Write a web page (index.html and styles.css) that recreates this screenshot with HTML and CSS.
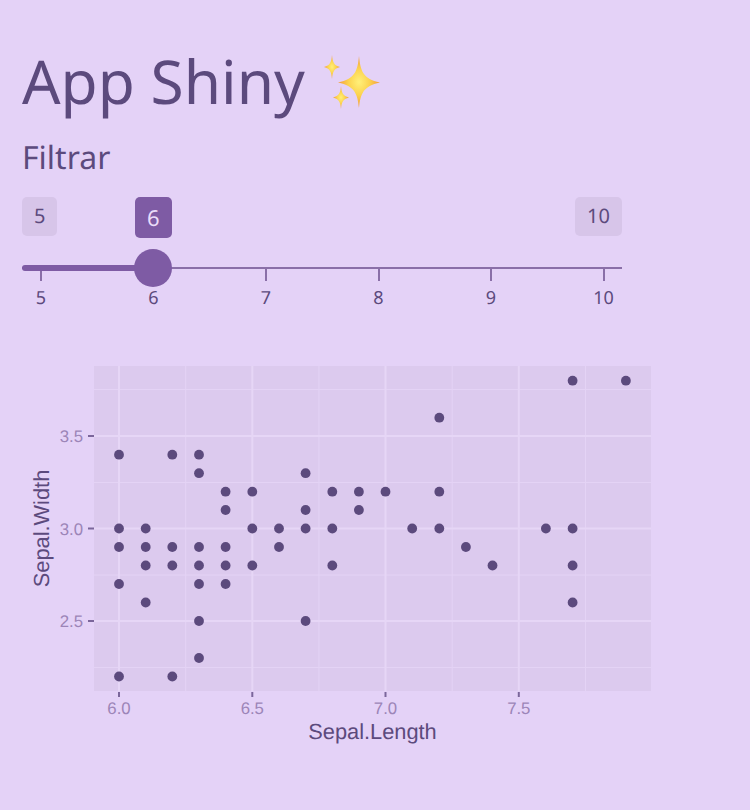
FILE: index.html
```html
<!DOCTYPE html>
<html lang="pt">
<head>
<meta charset="utf-8">
<title>App Shiny</title>
<link rel="stylesheet" href="styles.css">
</head>
<body>
<main class="page">
  <h1 class="title">App Shiny
    <svg class="sparkles" viewBox="0 0 60 60" aria-hidden="true">
      <defs>
        <radialGradient id="spark" cx="50%" cy="50%" r="50%">
          <stop offset="0" stop-color="#fff07a"/>
          <stop offset="0.5" stop-color="#fcd34f"/>
          <stop offset="1" stop-color="#f29a3c"/>
        </radialGradient>
      </defs>
      <path fill="url(#spark)" d="M37 2 C38.500 17 41 25 58 28.500 C41 32 38.500 40 37 54 C35.500 40 33 32 16 28.500 C33 25 35.500 17 37 2Z"/>
      <path fill="url(#spark)" d="M10 1 C10.600 8 12 11.500 18 13 C12 14.500 10.600 18 10 25 C9.400 18 8 14.500 2 13 C8 11.500 9.400 8 10 1Z"/>
      <path fill="url(#spark)" d="M19 32 C19.600 39 21 42 27 43.500 C21 45 19.600 48 19 55 C18.400 48 17 45 11 43.500 C17 42 18.400 39 19 32Z"/>
    </svg>
  </h1>
  <h2 class="subtitle">Filtrar</h2>

  <section class="slider">
    <div class="badges">
      <span class="badge">5</span>
      <span class="badge">10</span>
    </div>
    <span class="badge badge-value">6</span>
    <div class="track"><div class="track-fill"></div><div class="thumb"></div></div>
    <div class="ticks">
      <div class="tick">5</div>
      <div class="tick">6</div>
      <div class="tick">7</div>
      <div class="tick">8</div>
      <div class="tick">9</div>
      <div class="tick">10</div>
    </div>
  </section>

  <svg class="plot" viewBox="22 350 640 400" role="img" aria-label="Sepal.Width por Sepal.Length">
    <rect class="panel" x="94" y="366" width="557" height="325"/>
    <g class="grid-minor">
      <line x1="94" x2="651" y1="389.500" y2="389.500"/>
      <line x1="94" x2="651" y1="482.500" y2="482.500"/>
      <line x1="94" x2="651" y1="575" y2="575"/>
      <line x1="94" x2="651" y1="667.500" y2="667.500"/>
      <line y1="366" y2="691" x1="185.700" x2="185.700"/>
      <line y1="366" y2="691" x1="318.900" x2="318.900"/>
      <line y1="366" y2="691" x1="452.200" x2="452.200"/>
      <line y1="366" y2="691" x1="585.500" x2="585.500"/>
    </g>
    <g class="grid-major">
      <line x1="94" x2="651" y1="436" y2="436"/>
      <line x1="94" x2="651" y1="528.500" y2="528.500"/>
      <line x1="94" x2="651" y1="621" y2="621"/>
      <line y1="366" y2="691" x1="119" x2="119"/>
      <line y1="366" y2="691" x1="252.300" x2="252.300"/>
      <line y1="366" y2="691" x1="385.500" x2="385.500"/>
      <line y1="366" y2="691" x1="518.800" x2="518.800"/>
    </g>
    <g class="axis-ticks">
      <line x1="88" x2="94" y1="436" y2="436"/>
      <line x1="88" x2="94" y1="528.500" y2="528.500"/>
      <line x1="88" x2="94" y1="621" y2="621"/>
      <line y1="692" y2="697" x1="119" x2="119"/>
      <line y1="692" y2="697" x1="252.300" x2="252.300"/>
      <line y1="692" y2="697" x1="385.500" x2="385.500"/>
      <line y1="692" y2="697" x1="518.800" x2="518.800"/>
    </g>
    <g class="tick-labels-y">
      <text x="83" y="442">3.5</text>
      <text x="83" y="534.500">3.0</text>
      <text x="83" y="627">2.5</text>
    </g>
    <g class="tick-labels-x">
      <text x="119" y="714">6.0</text>
      <text x="252.300" y="714">6.5</text>
      <text x="385.500" y="714">7.0</text>
      <text x="518.800" y="714">7.5</text>
    </g>
    <text class="axis-title" x="372.500" y="739">Sepal.Length</text>
    <text class="axis-title" transform="translate(49 528.500) rotate(-90)">Sepal.Width</text>
    <g class="points">
      <circle cx="572.600" cy="380.700"/><circle cx="625.900" cy="380.700"/>
      <circle cx="439.300" cy="417.700"/>
      <circle cx="119" cy="454.700"/><circle cx="172.300" cy="454.700"/><circle cx="199" cy="454.700"/>
      <circle cx="199" cy="473.200"/><circle cx="305.600" cy="473.200"/>
      <circle cx="225.600" cy="491.700"/><circle cx="252.300" cy="491.700"/><circle cx="332.300" cy="491.700"/><circle cx="358.900" cy="491.700"/><circle cx="385.500" cy="491.700"/><circle cx="439.300" cy="491.700"/>
      <circle cx="225.600" cy="510"/><circle cx="305.600" cy="510"/><circle cx="358.900" cy="510"/>
      <circle cx="119" cy="528.500"/><circle cx="145.700" cy="528.500"/><circle cx="252.300" cy="528.500"/><circle cx="279" cy="528.500"/><circle cx="305.600" cy="528.500"/><circle cx="332.300" cy="528.500"/><circle cx="412.200" cy="528.500"/><circle cx="439.300" cy="528.500"/><circle cx="545.900" cy="528.500"/><circle cx="572.600" cy="528.500"/>
      <circle cx="119" cy="547"/><circle cx="145.700" cy="547"/><circle cx="172.300" cy="547"/><circle cx="199" cy="547"/><circle cx="225.600" cy="547"/><circle cx="279" cy="547"/><circle cx="465.900" cy="547"/>
      <circle cx="145.700" cy="565.500"/><circle cx="172.300" cy="565.500"/><circle cx="199" cy="565.500"/><circle cx="225.600" cy="565.500"/><circle cx="252.300" cy="565.500"/><circle cx="332.300" cy="565.500"/><circle cx="492.500" cy="565.500"/><circle cx="572.600" cy="565.500"/>
      <circle cx="119" cy="584"/><circle cx="199" cy="584"/><circle cx="225.600" cy="584"/>
      <circle cx="145.700" cy="602.500"/><circle cx="572.600" cy="602.500"/>
      <circle cx="199" cy="621"/><circle cx="305.600" cy="621"/>
      <circle cx="199" cy="658"/>
      <circle cx="119" cy="676.500"/><circle cx="172.300" cy="676.500"/>
    </g>
  </svg>
</main>
</body>
</html>
```
FILE: styles.css
```css
html, body {
  margin: 0;
  padding: 0;
  background: #e4d2f7;
}

body {
  font-family: "Noto Sans", "Open Sans", sans-serif;
  color: #5c4a7d;
  text-rendering: geometricPrecision;
}

.page {
  padding: 0 22px;
  height: 810px;
  box-sizing: border-box;
  overflow: hidden;
}

.title {
  display: flex;
  align-items: center;
  gap: 17px;
  margin: 0;
  padding-top: 39px;
  font-size: 60.400px;
  font-weight: 400;
  line-height: 84px;
}

.sparkles {
  width: 60px;
  height: 60px;
  margin-top: 5px;
}

.subtitle {
  margin: 0;
  padding-top: 13px;
  font-size: 32px;
  font-weight: 400;
  line-height: 44px;
}

.slider {
  position: relative;
  width: 600px;
  margin-top: 17px;
}

.badges {
  display: flex;
  justify-content: space-between;
}

.badge {
  padding: 0 12px;
  height: 39px;
  border-radius: 5px;
  background: #d7c5e9;
  font-size: 20px;
  line-height: 37px;
  color: #5c4a7d;
}

.badge-value {
  position: absolute;
  left: 113px;
  top: 0;
  height: 41px;
  padding: 0 12px;
  line-height: 43px;
  font-size: 22px;
  background: #7e5ba4;
  color: #eadcf9;
}

.track {
  position: relative;
  height: 2px;
  margin-top: 31px;
  background: #8a6fa8;
}

.track-fill {
  position: absolute;
  left: 0;
  top: -2px;
  width: 120px;
  height: 6px;
  border-radius: 3px 0 0 3px;
  background: #7e5ba4;
}

.thumb {
  position: absolute;
  left: 112px;
  top: -18px;
  width: 38px;
  height: 38px;
  border-radius: 50%;
  background: #7e5ba4;
}

.ticks {
  display: flex;
  margin-left: -37.250px;
}

.tick {
  flex: 0 0 112.500px;
  display: flex;
  flex-direction: column;
  align-items: center;
  font-size: 18px;
  line-height: 24px;
  color: #5c4a7d;
}

.tick::before {
  content: "";
  width: 2px;
  height: 12px;
  margin-bottom: 5px;
  background: #8a6fa8;
}

.plot {
  display: block;
  width: 640px;
  height: 400px;
  margin-top: 40px;
}

.panel {
  fill: #dccaee;
}

.grid-minor line {
  stroke: #e4d3f5;
  stroke-width: 1;
}

.grid-major line {
  stroke: #e6d6f6;
  stroke-width: 2;
}

.axis-ticks line {
  stroke: #7b669b;
  stroke-width: 2;
}

.tick-labels-y text,
.tick-labels-x text {
  font-family: "Liberation Sans", sans-serif;
  font-size: 16.800px;
  fill: #9c85b8;
}

.tick-labels-y text {
  text-anchor: end;
}

.tick-labels-x text,
.axis-title {
  text-anchor: middle;
}

.axis-title {
  font-family: "Liberation Sans", sans-serif;
  font-size: 21.800px;
  fill: #5c4a7d;
}

.points circle {
  r: 4.900px;
  fill: #5c4a7d;
}
```
